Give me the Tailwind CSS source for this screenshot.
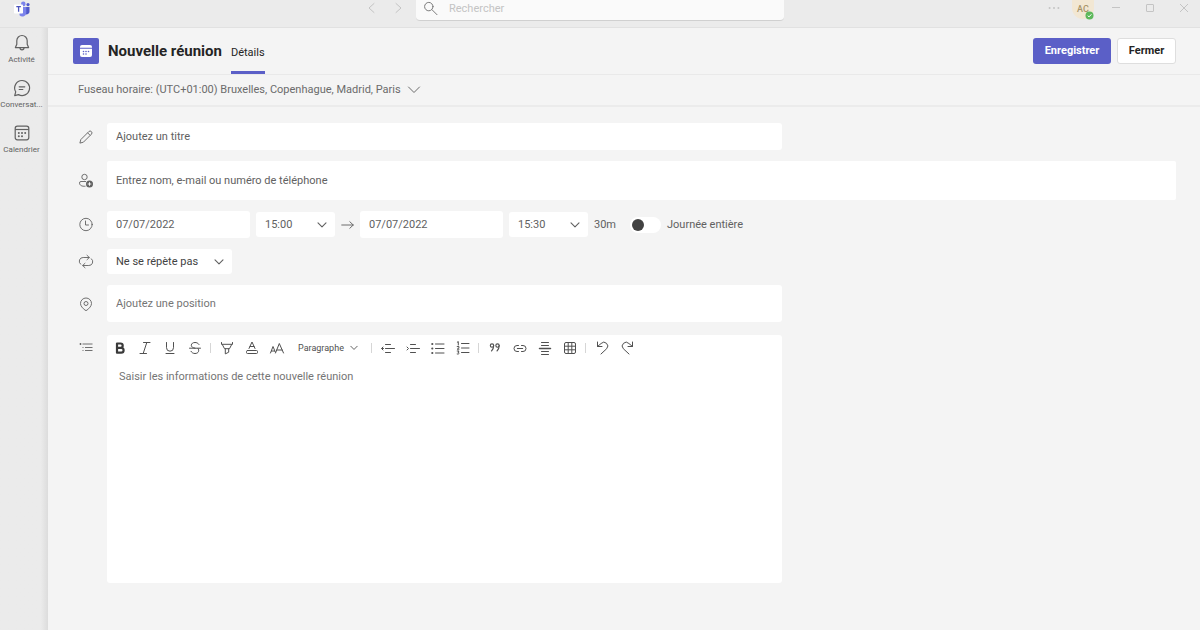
<!DOCTYPE html>
<html lang="fr">
<head>
<meta charset="utf-8">
<meta name="viewport" content="width=device-width, initial-scale=1">
<title>Nouvelle réunion</title>
<script src="https://cdn.jsdelivr.net/npm/@tailwindcss/browser@4"></script>
</head>
<body class="flex min-h-screen flex-col bg-[#f4f4f4] font-['Roboto','Open_Sans',sans-serif] text-[11px] leading-4 text-[#616161]">
<svg class="hidden">
  <symbol id="chevron" viewBox="0 0 10 6"><path d="M1 .8l4 4 4-4" fill="none" stroke="currentColor" stroke-width="1.1" stroke-linecap="round" stroke-linejoin="round"/></symbol>
</svg>

<header class="grid h-7 grid-cols-[1fr_368px_1fr] border-b border-[#e1e1e1] bg-[#ebebeb] text-[#c4c4c4]">
  <div class="flex items-start justify-between pr-3 pl-3.5">
    <svg class="mt-px h-4 w-4" viewBox="0 0 16 16" aria-label="Teams" role="img">
      <circle cx="14" cy="3.6" r="1.6" fill="#5059c9"/>
      <path d="M11 6h4.5v4.5a2.6 2.6 0 0 1-4.5 2z" fill="#5059c9"/>
      <circle cx="9.3" cy="2.9" r="2.3" fill="#7b83eb"/>
      <path d="M5.5 6h6.8v5.2a3.9 3.9 0 0 1-6.8 3z" fill="#7b83eb"/>
      <rect x="0" y="3.500" width="9" height="9" rx=".8" fill="#fff"/>
      <path d="M2.300 5.700h4.600M4.600 5.700v5" stroke="#4b53bc" stroke-width="1.300"/>
    </svg>
    <div class="flex gap-3.5 pt-0.5">
      <button class="grid h-3 w-3 place-items-center" aria-label="Précédent"><svg class="h-3 w-3" viewBox="0 0 12 12" fill="none" stroke="currentColor" stroke-linecap="round"><path d="M8 1.5L3 6l5 4.5"/></svg></button>
      <button class="grid h-3 w-3 place-items-center" aria-label="Suivant"><svg class="h-3 w-3" viewBox="0 0 12 12" fill="none" stroke="currentColor" stroke-linecap="round"><path d="M4 1.5L9 6l-5 4.5"/></svg></button>
    </div>
  </div>
  <label class="flex h-[21px] items-start gap-2.5 rounded-b border-b border-[#d0d0d0] bg-[#fafafa] pl-[7px]">
    <svg class="mt-px h-4 w-4 text-[#7a7a7a]" viewBox="0 0 16 16" fill="none" stroke="currentColor" stroke-linecap="round"><circle cx="5.8" cy="5.6" r="4.2"/><path d="M9 8.7l5 5"/></svg>
    <input class="h-[17px] min-w-0 flex-1 outline-none placeholder:text-[#c4c4c4]" type="search" placeholder="Rechercher" aria-label="Rechercher">
  </label>
  <div class="flex items-start justify-end pr-2.5">
    <button class="mt-0.5 mr-3 h-3 w-3" aria-label="Plus d'options"><svg viewBox="0 0 12 12" fill="currentColor"><circle cx="1.6" cy="6" r="1"/><circle cx="6" cy="6" r="1"/><circle cx="10.4" cy="6" r="1"/></svg></button>
    <button class="relative mr-4 h-[19px] w-[22px] rounded-b-full bg-[#f2e7d3] pb-0.5 text-[9px] leading-4 font-medium text-[#a89468]" aria-label="Profil AC">AC
      <svg class="absolute top-[11px] left-[13px] h-[9px] w-[9px]" viewBox="0 0 9 9"><circle cx="4.5" cy="4.5" r="4" fill="#5db85b"/><path d="M2.7 4.6l1.3 1.3 2.4-2.6" fill="none" stroke="#fff"/></svg>
    </button>
    <div class="flex gap-[22px] pt-0.5">
      <button class="h-3 w-3" aria-label="Réduire"><svg viewBox="0 0 12 12" fill="none" stroke="currentColor"><path d="M2 5.5h8"/></svg></button>
      <button class="h-3 w-3" aria-label="Agrandir"><svg viewBox="0 0 12 12" fill="none" stroke="currentColor"><rect x="2.500" y="2.500" width="7" height="7" rx=".5"/></svg></button>
      <button class="h-3 w-3" aria-label="Fermer la fenêtre"><svg viewBox="0 0 12 12" fill="none" stroke="currentColor"><path d="M2 2l8 8M10 2l-8 8"/></svg></button>
    </div>
  </div>
</header>

<div class="flex flex-1">
  <nav class="flex w-12 shrink-0 flex-col gap-3 bg-linear-to-r from-[#ebebeb] from-85% to-[#dcdcdc] pt-[5px] text-[8px] leading-3 text-[#616161]">
    <a href="#" class="flex h-[33px] w-[43px] flex-col items-center justify-between">
      <svg class="h-5 w-5" viewBox="0 0 20 20" fill="none" stroke="currentColor" stroke-width="1.2" stroke-linejoin="round"><path d="M10 2.500a5.200 5.200 0 0 0-5.200 5.200v3.500L3.400 14.600h13.200l-1.400-3.400V7.700A5.200 5.200 0 0 0 10 2.500z"/><path d="M8 14.800a2 2 0 0 0 4 0"/></svg>
      <span>Activité</span>
    </a>
    <a href="#" class="flex h-[33px] w-[43px] flex-col items-center justify-between">
      <svg class="h-5 w-5" viewBox="0 0 20 20" fill="none" stroke="currentColor" stroke-width="1.2" stroke-linejoin="round" stroke-linecap="round"><path d="M10 2.500a7.500 7.500 0 1 1-3.500 14.100l-3.800 1 1-3.800A7.500 7.500 0 0 1 10 2.500z"/><path d="M7.200 8.800h5.600M7.200 11.500h3.600"/></svg>
      <span>Conversat...</span>
    </a>
    <a href="#" class="flex h-[33px] w-[43px] flex-col items-center justify-between">
      <svg class="h-5 w-5" viewBox="0 0 20 20" fill="none" stroke="currentColor" stroke-width="1.2"><rect x="3.200" y="3.200" width="13.600" height="13.600" rx="2.200"/><path d="M3.200 6.500h13.600"/><g fill="currentColor" stroke="none"><circle cx="6.800" cy="10" r="1"/><circle cx="10" cy="10" r="1"/><circle cx="13.200" cy="10" r="1"/><circle cx="6.800" cy="13.200" r="1"/><circle cx="10" cy="13.200" r="1"/></g></svg>
      <span>Calendrier</span>
    </a>
  </nav>

  <main class="min-w-0 flex-1">
    <div class="flex h-[47px] items-center border-b border-[#e9e9e9] pr-6 pl-[25px]">
      <span class="grid h-[26px] w-[26px] place-items-center rounded-xs bg-[#5b5fc7]">
        <svg class="h-3 w-3" viewBox="0 0 12 12" fill="#fff"><path d="M2 0h8a2 2 0 0 1 2 2v.8H0V2a2 2 0 0 1 2-2z"/><path d="M0 3.800h12V10a2 2 0 0 1-2 2H2a2 2 0 0 1-2-2z"/><g fill="#5b5fc7"><circle cx="3.500" cy="6.500" r=".8"/><circle cx="6" cy="6.500" r=".8"/><circle cx="8.500" cy="6.500" r=".8"/><circle cx="3.500" cy="9" r=".8"/><circle cx="6" cy="9" r=".8"/></g></svg>
      </span>
      <h1 class="ml-[9px] text-[15px] font-bold text-[#242424]">Nouvelle réunion</h1>
      <a href="#" class="ml-[9px] flex h-full items-center border-b-3 border-[#5b5fc7] pt-1.5 text-[#242424]">Détails</a>
      <div class="ml-auto flex gap-1.5 font-bold">
        <button class="h-[26px] w-[78px] rounded-[3px] bg-[#5b5fc7] text-white">Enregistrer</button>
        <button class="h-[26px] w-[59px] rounded-[3px] border border-[#dedede] bg-white text-[#242424]">Fermer</button>
      </div>
    </div>
    <div class="flex h-8 items-center border-b-2 border-[#ebebeb] pl-[30px]">
      <button class="flex items-center gap-1.5 text-[#6b6b6b]">Fuseau horaire: (UTC+01:00) Bruxelles, Copenhague, Madrid, Paris
        <svg class="h-2 w-3.5" viewBox="0 0 14 8" fill="none" stroke="currentColor" stroke-linecap="round"><path d="M1.500 1L7 6.500 12.500 1"/></svg>
      </button>
    </div>

    <form class="flex flex-col gap-[11px] pt-4 pr-6 pb-12 pl-[30px] text-[#616161]">
      <div class="flex items-center gap-[13px]">
        <svg class="h-4 w-4 shrink-0" viewBox="0 0 16 16" fill="none" stroke="currentColor" stroke-width=".9" stroke-linejoin="round"><path d="M10.800 2.600a1.800 1.800 0 0 1 2.600 2.600l-8 8L1.900 14.100l.9-3.500zM9.600 3.800l2.600 2.600"/></svg>
        <input class="h-[27px] w-full max-w-[675px] rounded-[3px] bg-white px-[9px] placeholder:text-[#616161]" type="text" placeholder="Ajoutez un titre" aria-label="Titre">
      </div>
      <div class="flex items-center gap-[13px]">
        <svg class="h-4 w-4 shrink-0" viewBox="0 0 16 16" fill="none" stroke="currentColor" stroke-width=".9"><circle cx="6.500" cy="4" r="2.700"/><path d="M7.500 13.200C4 13.600 1.500 12.300 1.500 10a1.500 1.500 0 0 1 1.500-1.500h5"/><circle cx="11.500" cy="11" r="3.500" fill="currentColor" stroke="none"/><path d="M11.500 9.200v3.600M9.700 11h3.600" stroke="#fff"/></svg>
        <input class="h-[39px] min-w-0 flex-1 rounded-xs bg-white px-[9px] placeholder:text-[#616161]" type="text" placeholder="Entrez nom, e-mail ou numéro de téléphone" aria-label="Participants">
      </div>
      <div class="flex items-center gap-[13px]">
        <svg class="h-4 w-4 shrink-0" viewBox="0 0 16 16" fill="none" stroke="currentColor" stroke-width=".9" stroke-linecap="round"><circle cx="8" cy="7.500" r="6.200"/><path d="M7.500 4v4h3"/></svg>
        <div class="flex items-center gap-1.5">
          <input class="h-[27px] w-[143px] rounded-[3px] bg-white px-[9px]" type="text" value="07/07/2022" aria-label="Date de début">
          <div class="grid items-center">
            <select class="col-start-1 row-start-1 h-[25px] w-[79px] appearance-none rounded-[3px] bg-white pl-[9px]" aria-label="Heure de début"><option>15:00</option></select>
            <svg class="pointer-events-none col-start-1 row-start-1 mr-2 h-1.5 w-2.5 justify-self-end"><use href="#chevron"/></svg>
          </div>
          <svg class="h-3 w-[13px]" viewBox="0 0 14 12" fill="none" stroke="currentColor" stroke-linecap="round" stroke-linejoin="round"><path d="M.8 6h12.400M9.500 2.500L13.200 6 9.500 9.500"/></svg>
          <input class="h-[27px] w-[143px] rounded-[3px] bg-white px-[9px]" type="text" value="07/07/2022" aria-label="Date de fin">
          <div class="grid items-center">
            <select class="col-start-1 row-start-1 h-[25px] w-[79px] appearance-none rounded-[3px] bg-white pl-[9px]" aria-label="Heure de fin"><option>15:30</option></select>
            <svg class="pointer-events-none col-start-1 row-start-1 mr-2 h-1.5 w-2.5 justify-self-end"><use href="#chevron"/></svg>
          </div>
          <span class="w-[30px]">30m</span>
          <label class="flex items-center gap-1.5 whitespace-nowrap">
            <input type="checkbox" role="switch" class="h-4 w-[31px] appearance-none rounded-full bg-white px-0.5 py-0.5 before:block before:h-3 before:w-3 before:rounded-full before:bg-[#424242]">
            Journée entière
          </label>
        </div>
      </div>
      <div class="flex items-center gap-[13px]">
        <svg class="h-4 w-4 shrink-0" viewBox="0 0 16 16" fill="none" stroke="currentColor" stroke-width=".9" stroke-linecap="round" stroke-linejoin="round"><path d="M2.600 10.200A3.800 3.800 0 0 1 5.200 3.500h6M9 1.300l2.300 2.200L9 5.700M13.400 4.800a3.800 3.800 0 0 1-2.600 6.700h-6M7 9.300l-2.300 2.200L7 13.700"/></svg>
        <div class="grid items-center">
          <select class="col-start-1 row-start-1 h-[25px] w-[125px] appearance-none rounded-[3px] bg-white pl-[9px] text-[#424242]" aria-label="Répétition"><option>Ne se répète pas</option></select>
          <svg class="pointer-events-none col-start-1 row-start-1 mr-2 h-1.5 w-2.5 justify-self-end"><use href="#chevron"/></svg>
        </div>
      </div>
      <div class="flex items-center gap-[13px]">
        <svg class="h-4 w-4 shrink-0" viewBox="0 0 16 16" fill="none" stroke="currentColor" stroke-width=".9"><path d="M8 2a5.500 5.500 0 0 1 5.500 5.500c0 2.600-2.300 4.800-4.500 6.600a1.500 1.500 0 0 1-2 0C4.800 12.300 2.500 10.100 2.500 7.500A5.500 5.500 0 0 1 8 2z"/><circle cx="8" cy="7.500" r="2"/></svg>
        <input class="h-[37px] w-full max-w-[675px] rounded-[3px] bg-white px-[9px] placeholder:text-[#757575]" type="text" placeholder="Ajoutez une position" aria-label="Position">
      </div>
      <div class="mt-0.5 flex items-start gap-[13px]">
        <svg class="mt-1 h-4 w-4 shrink-0" viewBox="0 0 16 16" fill="none" stroke="currentColor" stroke-width=".9"><path d="M4.500 5h10M7 8.500h7.500M7 11.500h7.500M1.500 5h2M4.500 8.500h1M4.500 11.500h1M2.500 4v2"/></svg>
        <div class="w-full max-w-[675px] rounded-[3px] bg-white">
          <div class="flex h-[26px] items-center text-[#505050]" role="toolbar" aria-label="Mise en forme">
            <button type="button" class="grid w-[25px] place-items-center" aria-label="Gras"><svg class="h-4 w-4" viewBox="0 0 16 16" fill="none" stroke="#3a3a3a" stroke-width="2.200" stroke-linejoin="round"><path d="M5 3.500h3.500a2.200 2.200 0 0 1 0 4.400H5zM5 7.900h4.200a2.400 2.400 0 0 1 0 4.800H5z"/></svg></button>
            <button type="button" class="grid w-[25px] place-items-center" aria-label="Italique"><svg class="h-4 w-4" viewBox="0 0 16 16" fill="none" stroke="currentColor" stroke-linecap="round"><path d="M6.500 2.500h6.500M3 13.500h6.500M9.800 2.500L6.200 13.500"/></svg></button>
            <button type="button" class="grid w-[25px] place-items-center" aria-label="Souligné"><svg class="h-4 w-4" viewBox="0 0 16 16" fill="none" stroke="currentColor" stroke-linecap="round"><path d="M4.500 2.500v5.200a3.500 3.500 0 0 0 7 0V2.500M4 13.500h8"/></svg></button>
            <button type="button" class="grid w-[25px] place-items-center" aria-label="Barré"><svg class="h-4 w-4" viewBox="0 0 16 16" fill="none" stroke="currentColor" stroke-linecap="round"><path d="M12 4.500C11 3 9.500 2.500 8 2.500c-2 0-3.700 1-3.700 2.800 0 1.600 1.500 2.400 3.700 2.900M2.500 8.200h11M11 8.500c1.600 1.800.7 5-3 5-1.700 0-3.200-.7-4-2.200"/></svg></button>
            <span class="mx-[3px] h-2.5 w-px bg-[#d6d6d6]"></span>
            <button type="button" class="grid w-[25px] place-items-center" aria-label="Surligner"><svg class="h-4 w-4" viewBox="0 0 16 16" fill="none" stroke="currentColor" stroke-linejoin="round" stroke-linecap="round"><path d="M2.500 2.500v1.800h11V2.500M3.300 4.500l2.200 4.200h5l2.200-4.200M6.300 8.900v5l3.400-1.700V8.900"/></svg></button>
            <button type="button" class="grid w-[25px] place-items-center" aria-label="Couleur de police"><svg class="h-4 w-4" viewBox="0 0 16 16" fill="none" stroke="currentColor" stroke-linejoin="round" stroke-linecap="round"><path d="M5 8.500L8 2l3 6.500M6 6.500h4"/><rect x="2.500" y="10.500" width="11" height="3" rx="1"/></svg></button>
            <button type="button" class="grid w-[25px] place-items-center" aria-label="Taille de police"><svg class="h-4 w-4" viewBox="0 0 16 16" fill="none" stroke="currentColor" stroke-linejoin="round" stroke-linecap="round"><path d="M6.500 13l3.800-9.500L14.500 13M7.800 10h5.400M1.500 13L4 6.500 6.300 12M2.400 11h3.200"/></svg></button>
            <button type="button" class="flex w-[79px] items-center gap-1.5 pl-[9px] text-[9px]">Paragraphe <svg class="h-1.5 w-2"><use href="#chevron"/></svg></button>
            <span class="mx-[3px] h-2.5 w-px bg-[#d6d6d6]"></span>
            <button type="button" class="grid w-[25px] place-items-center" aria-label="Diminuer le retrait"><svg class="h-4 w-4" viewBox="0 0 16 16" fill="none" stroke="currentColor" stroke-linecap="round"><path d="M5.500 4.500h5M5.500 8.500h9M5.500 12.500h5M3 7L1.500 8.500 3 10M2 8.500h1.500"/></svg></button>
            <button type="button" class="grid w-[25px] place-items-center" aria-label="Augmenter le retrait"><svg class="h-4 w-4" viewBox="0 0 16 16" fill="none" stroke="currentColor" stroke-linecap="round"><path d="M5.500 4.500h5M5.500 8.500h9M5.500 12.500h5M2 7l1.500 1.500L2 10"/></svg></button>
            <button type="button" class="grid w-[25px] place-items-center" aria-label="Liste à puces"><svg class="h-4 w-4" viewBox="0 0 16 16" fill="none" stroke="currentColor" stroke-linecap="round"><path d="M5.500 4h8.500M5.500 8.500h8.500M5.500 13h8.500"/><g fill="currentColor" stroke="none"><circle cx="2.300" cy="4" r="1.100"/><circle cx="2.300" cy="8.500" r="1.100"/><circle cx="2.300" cy="13" r="1.100"/></g></svg></button>
            <button type="button" class="grid w-[25px] place-items-center" aria-label="Liste numérotée"><svg class="h-4 w-4" viewBox="0 0 16 16" fill="none" stroke="currentColor" stroke-linecap="round"><path d="M6.500 3.500h7.500M6.500 8h7.500M6.500 12.500h7.500"/><path d="M2.300 2.200l1-.6v3.400M2.200 6.600h1.800v1.200L2.200 9.200H4M2.200 11h1.800L3 12.400c1.800 0 1.400 2.200-.8 1.600"/></svg></button>
            <span class="mx-[3px] h-2.5 w-px bg-[#d6d6d6]"></span>
            <button type="button" class="grid w-[25px] place-items-center" aria-label="Citation"><svg class="h-4 w-4" viewBox="0 0 16 16" fill="none" stroke="currentColor" stroke-width="1.100" stroke-linecap="round"><circle cx="5" cy="5.600" r="1.700"/><path d="M6.700 5.600c0 2.500-.8 4.200-2.200 5.400"/><circle cx="10.500" cy="5.600" r="1.700"/><path d="M12.200 5.600c0 2.500-.8 4.200-2.200 5.400"/></svg></button>
            <button type="button" class="grid w-[25px] place-items-center" aria-label="Lien"><svg class="h-4 w-4" viewBox="0 0 16 16" fill="none" stroke="currentColor" stroke-linecap="round"><path d="M6.500 5.500H5a3 3 0 0 0 0 6h1.500M9.500 5.500H11a3 3 0 0 1 0 6H9.500M5.300 8.500h5.400"/></svg></button>
            <button type="button" class="grid w-[25px] place-items-center" aria-label="Ligne horizontale"><svg class="h-4 w-4" viewBox="0 0 16 16" fill="none" stroke="currentColor" stroke-linecap="round"><path d="M4.500 2.500h7M4.500 5.500h7M4.500 11.500h7M4.500 14.500h7"/><path d="M2.500 8.500h11" stroke-width="1.500"/></svg></button>
            <button type="button" class="grid w-[25px] place-items-center" aria-label="Tableau"><svg class="h-4 w-4" viewBox="0 0 16 16" fill="none" stroke="currentColor"><rect x="2.500" y="2.500" width="11" height="11" rx="1.500"/><path d="M6.200 2.500v11M9.800 2.500v11M2.500 6.200h11M2.500 9.800h11"/></svg></button>
            <span class="mx-[3px] h-2.5 w-px bg-[#d6d6d6]"></span>
            <button type="button" class="grid w-[25px] place-items-center" aria-label="Annuler"><svg class="h-4 w-4" viewBox="0 0 16 16" fill="none" stroke="currentColor" stroke-linecap="round" stroke-linejoin="round"><path d="M3.500 2v4.500H8M3.500 6.500l3.600-3a3.800 3.800 0 0 1 5.600 5.200L7 14"/></svg></button>
            <button type="button" class="grid w-[25px] place-items-center" aria-label="Rétablir"><svg class="h-4 w-4" viewBox="0 0 16 16" fill="none" stroke="currentColor" stroke-linecap="round" stroke-linejoin="round"><path d="M13.500 2v4.500H9M13.500 6.500l-3.600-3a3.800 3.800 0 0 0-5.600 5.200L10 14"/></svg></button>
          </div>
          <textarea class="block h-[222px] w-full resize-none px-3 pt-2 placeholder:text-[#757575]" placeholder="Saisir les informations de cette nouvelle réunion" aria-label="Détails de la réunion"></textarea>
        </div>
      </div>
    </form>
  </main>
</div>
</body>
</html>
